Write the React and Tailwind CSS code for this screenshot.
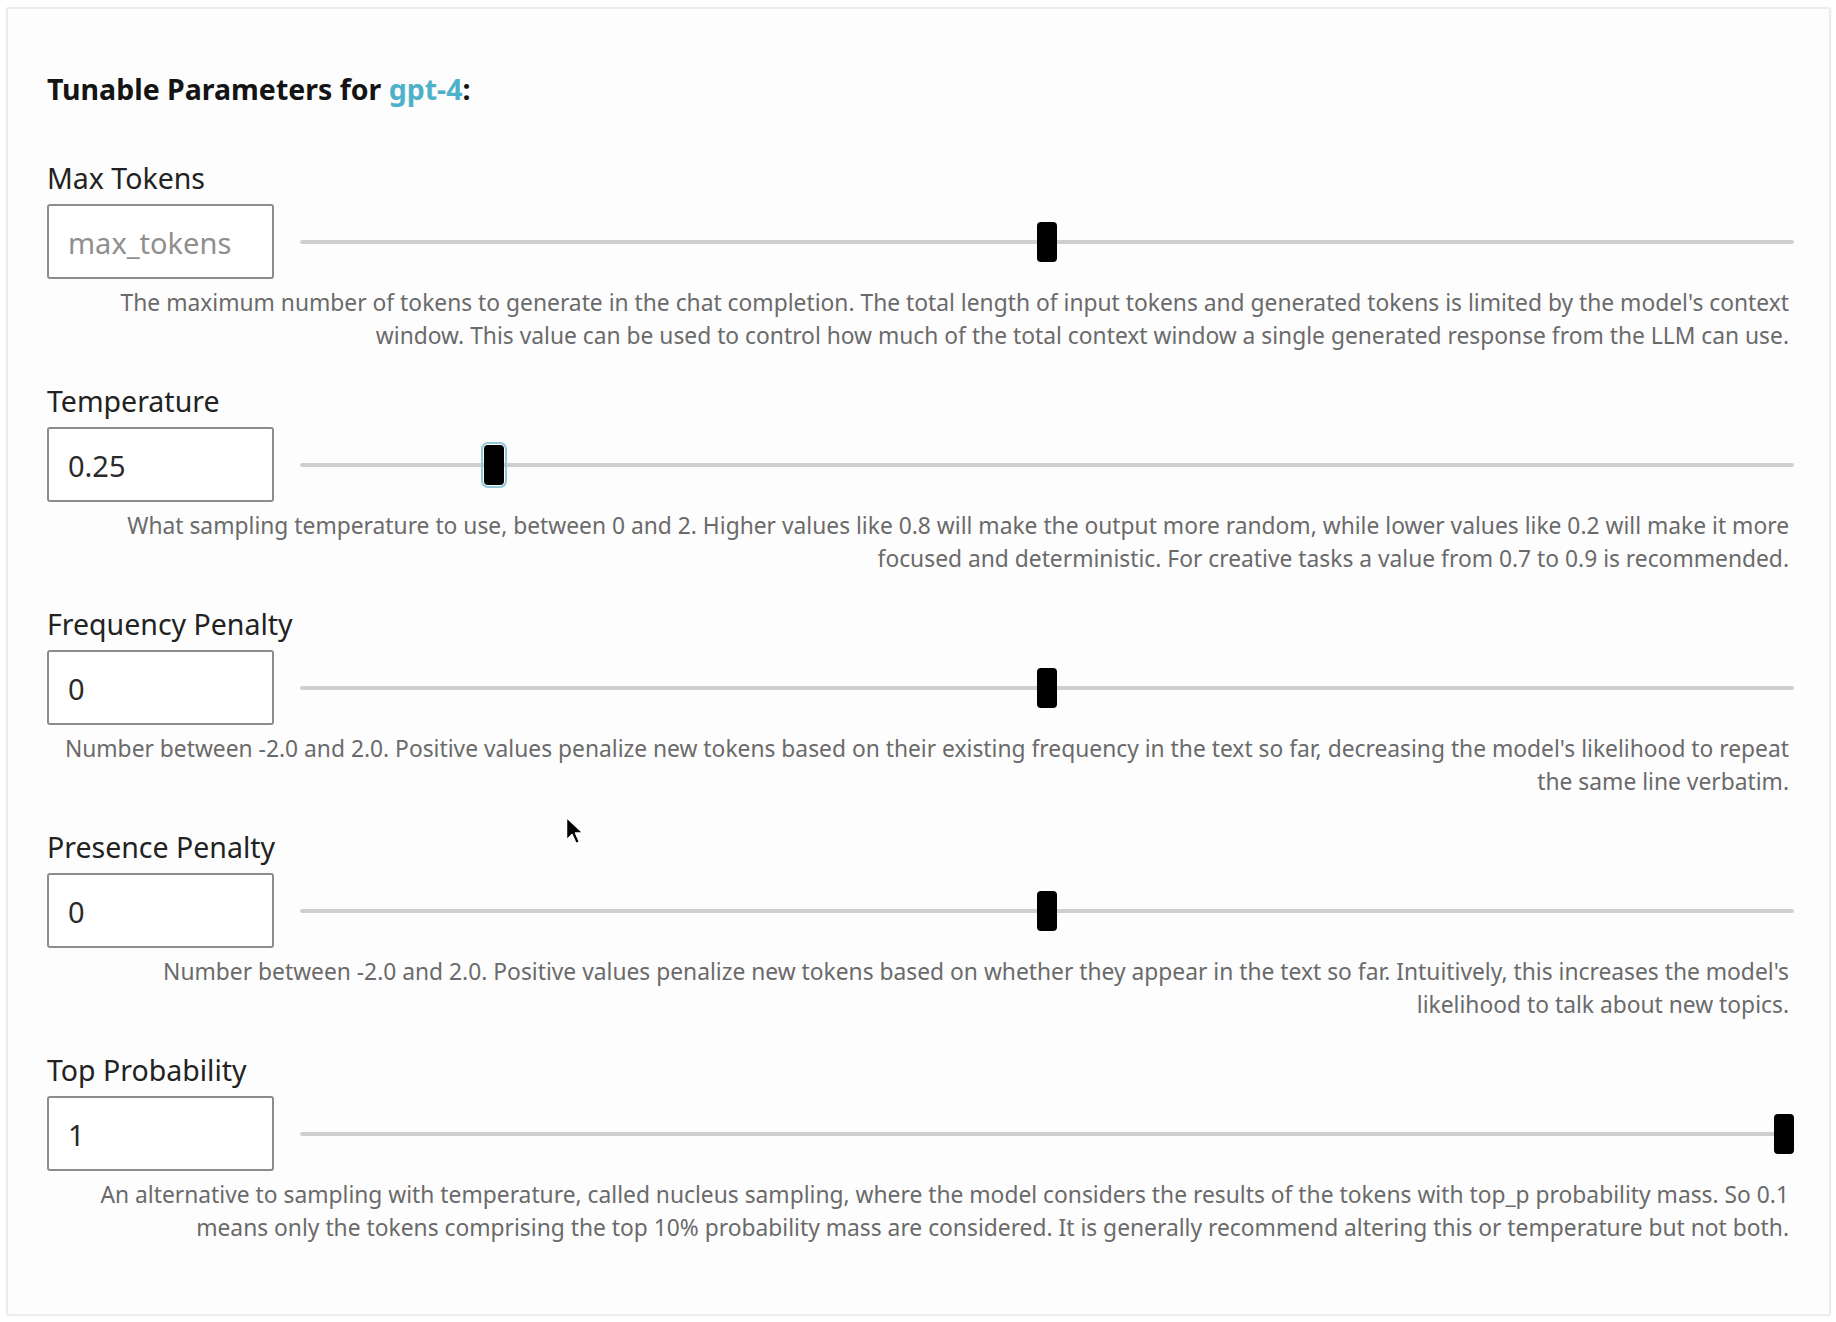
import React from "react";

const params = [
  {
    label: "Max Tokens",
    value: "",
    placeholder: "max_tokens",
    pct: 0.5,
    focus: false,
    lines: [
      "The maximum number of tokens to generate in the chat completion. The total length of input tokens and generated tokens is limited by the model's context",
      "window. This value can be used to control how much of the total context window a single generated response from the LLM can use.",
    ],
  },
  {
    label: "Temperature",
    value: "0.25",
    pct: 0.125,
    focus: true,
    lines: [
      "What sampling temperature to use, between 0 and 2. Higher values like 0.8 will make the output more random, while lower values like 0.2 will make it more",
      "focused and deterministic. For creative tasks a value from 0.7 to 0.9 is recommended.",
    ],
  },
  {
    label: "Frequency Penalty",
    value: "0",
    pct: 0.5,
    focus: false,
    lines: [
      "Number between -2.0 and 2.0. Positive values penalize new tokens based on their existing frequency in the text so far, decreasing the model's likelihood to repeat",
      "the same line verbatim.",
    ],
  },
  {
    label: "Presence Penalty",
    value: "0",
    pct: 0.5,
    focus: false,
    lines: [
      "Number between -2.0 and 2.0. Positive values penalize new tokens based on whether they appear in the text so far. Intuitively, this increases the model's",
      "likelihood to talk about new topics.",
    ],
  },
  {
    label: "Top Probability",
    value: "1",
    pct: 1,
    focus: false,
    lines: [
      "An alternative to sampling with temperature, called nucleus sampling, where the model considers the results of the tokens with top_p probability mass. So 0.1",
      "means only the tokens comprising the top 10% probability mass are considered. It is generally recommend altering this or temperature but not both.",
    ],
  },
];

function Slider({ pct, focus }) {
  return (
    <div className="relative flex h-[40px] flex-1 items-center">
      <div className="h-[4px] w-full rounded-full bg-[#cfcfcf]" />
      <div
        className={
          "absolute top-0 h-[40px] w-[20px] rounded-[4px] bg-black " +
          (focus ? "outline-2 outline-offset-1 outline-[#8fc9d8]" : "")
        }
        style={{ left: `calc((100% - 20px) * ${pct})` }}
      />
    </div>
  );
}

function Param({ p, last }) {
  return (
    <div className={last ? "" : "mb-[32px]"}>
      <div className="text-[28.5px] leading-[34px] text-[#222]">{p.label}</div>
      <div className="mt-[9px] flex items-center gap-[26px]">
        <div className="flex h-[75px] w-[227px] items-center rounded-[3px] border-2 border-[#8c8c8c] bg-white px-[19px] pt-[3px] text-[29px]">
          {p.value ? (
            <span className="text-[#2a2a2a]">{p.value}</span>
          ) : (
            <span className="text-[#8f8f8f]">{p.placeholder}</span>
          )}
        </div>
        <Slider pct={p.pct} focus={p.focus} />
      </div>
      <p className="mt-[7px] mr-[5px] whitespace-nowrap text-right text-[22.8px] leading-[33px] text-[#6a6a6a]">
        {p.lines[0]}
        <br />
        {p.lines[1]}
      </p>
    </div>
  );
}

export default function App() {
  return (
    <div
      className="h-[1322px] w-[1836px] overflow-hidden bg-white pt-[7px] pl-[6px]"
      style={{ fontFamily: "'Noto Sans', Roboto, sans-serif" }}
    >
      <div className="relative h-[1309px] w-[1825px] rounded-[3px] border-2 border-[#ececec] bg-[#fdfdfd] pt-[63px] pr-[35px] pl-[39px] shadow-[0_0_2px_rgba(0,0,0,0.06)]">
        <h1 className="text-[28.5px] leading-[34px] font-bold text-[#141414]">
          Tunable Parameters for <span className="text-[#4cb1c9]">gpt-4</span>:
        </h1>
        <div className="mt-[55px]">
          {params.map((p, i) => (
            <Param key={p.label} p={p} last={i === params.length - 1} />
          ))}
        </div>
        <svg
          className="absolute left-[557px] top-[807px]"
          width="20"
          height="30"
          viewBox="0 0 20 30"
        >
          <path
            d="M1.5 1.5 L1.5 24 L7 18.5 L11 27.5 L14.5 26 L10.5 17 L18 17 Z"
            fill="#000"
            stroke="#fff"
            strokeWidth="1.5"
            strokeLinejoin="round"
          />
        </svg>
      </div>
    </div>
  );
}
